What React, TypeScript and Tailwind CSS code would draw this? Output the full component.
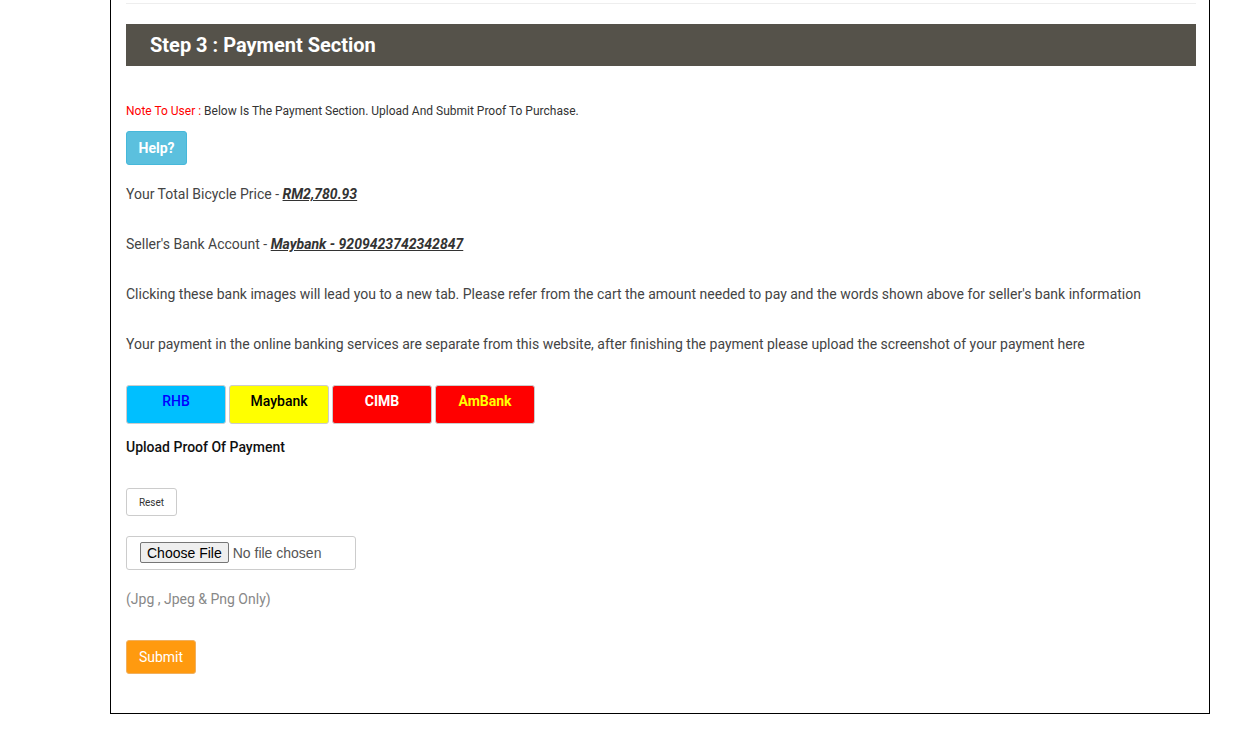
export default function App() {
  const banks = [
    { name: "RHB", bg: "bg-[#00bfff]", fg: "text-[#0000ff] font-medium" },
    { name: "Maybank", bg: "bg-[#ffff00]", fg: "text-black font-medium" },
    { name: "CIMB", bg: "bg-[#ff0000]", fg: "text-white font-bold" },
    { name: "AmBank", bg: "bg-[#ff0000]", fg: "text-[#ffff00] font-bold" },
  ];

  return (
    <div className="w-full bg-white font-['Roboto',sans-serif] text-[14px] text-[#444]">
      <div className="ml-[110px] w-[1100px] border-x border-b border-black pl-[15px] pr-[13px] pt-[3px] pb-[39px]">
        <div className="h-px bg-[#eeeeee]" />

        <div className="mt-[20px] h-[42px] bg-[#55524a] flex items-center pl-[24px]">
          <h2 className="text-white text-[20px] font-bold">Step 3 : Payment Section</h2>
        </div>

        <p className="mt-[37px] text-[12px] leading-[17px] text-[#333]">
          <span className="text-[#ff0000]">Note To User : </span>
          Below Is The Payment Section. Upload And Submit Proof To Purchase.
        </p>

        <button className="mt-[11px] h-[34px] w-[61px] rounded-[3px] border border-[#46b8da] bg-[#5bc0de] text-white font-bold text-[14px]">
          Help?
        </button>

        <p className="mt-[19px] leading-[20px]">
          Your Total Bicycle Price -{" "}
          <span className="font-bold italic underline text-[#333]">RM2,780.93</span>
        </p>
        <p className="mt-[30px] leading-[20px]">
          Seller's Bank Account -{" "}
          <span className="font-bold italic underline text-[#333]">Maybank - 9209423742342847</span>
        </p>
        <p className="mt-[30px] leading-[20px]">
          Clicking these bank images will lead you to a new tab. Please refer from the cart the amount needed to pay and the words shown above for seller's bank information
        </p>
        <p className="mt-[30px] leading-[20px]">
          Your payment in the online banking services are separate from this website, after finishing the payment please upload the screenshot of your payment here
        </p>

        <div className="mt-[31px] flex gap-[3px]">
          {banks.map((b) => (
            <div
              key={b.name}
              className={`h-[39px] w-[100px] rounded-[3px] border border-[#cccccc] ${b.bg} ${b.fg} text-center pt-[5px] leading-[20px] text-[14px]`}
            >
              {b.name}
            </div>
          ))}
        </div>

        <p className="mt-[13px] leading-[20px] font-medium text-[#111]">Upload Proof Of Payment</p>

        <button className="mt-[31px] h-[28px] w-[51px] rounded-[3px] border border-[#cccccc] bg-white text-[10px] text-[#333]">
          Reset
        </button>

        <div className="mt-[20px] h-[34px] w-[230px] rounded-[3px] border border-[#cccccc] flex items-center pl-[13px]">
          <input
            type="file"
            className="font-['Liberation_Sans',Arial,sans-serif] text-[14px] text-[#555] w-[214px] file:mr-[4px] file:h-[21px] file:px-[6px] file:border file:border-[#767676] file:rounded-[2px] file:bg-[#efefef] file:text-black file:font-['Liberation_Sans',Arial,sans-serif] file:text-[14px]"
          />
        </div>

        <p className="mt-[19px] leading-[20px] text-[#888]">(Jpg , Jpeg &amp; Png Only)</p>

        <button className="mt-[31px] h-[34px] w-[70px] rounded-[3px] border border-[#f0b060] bg-[#ff9a0f] text-white text-[14px]">
          Submit
        </button>
      </div>
    </div>
  );
}
